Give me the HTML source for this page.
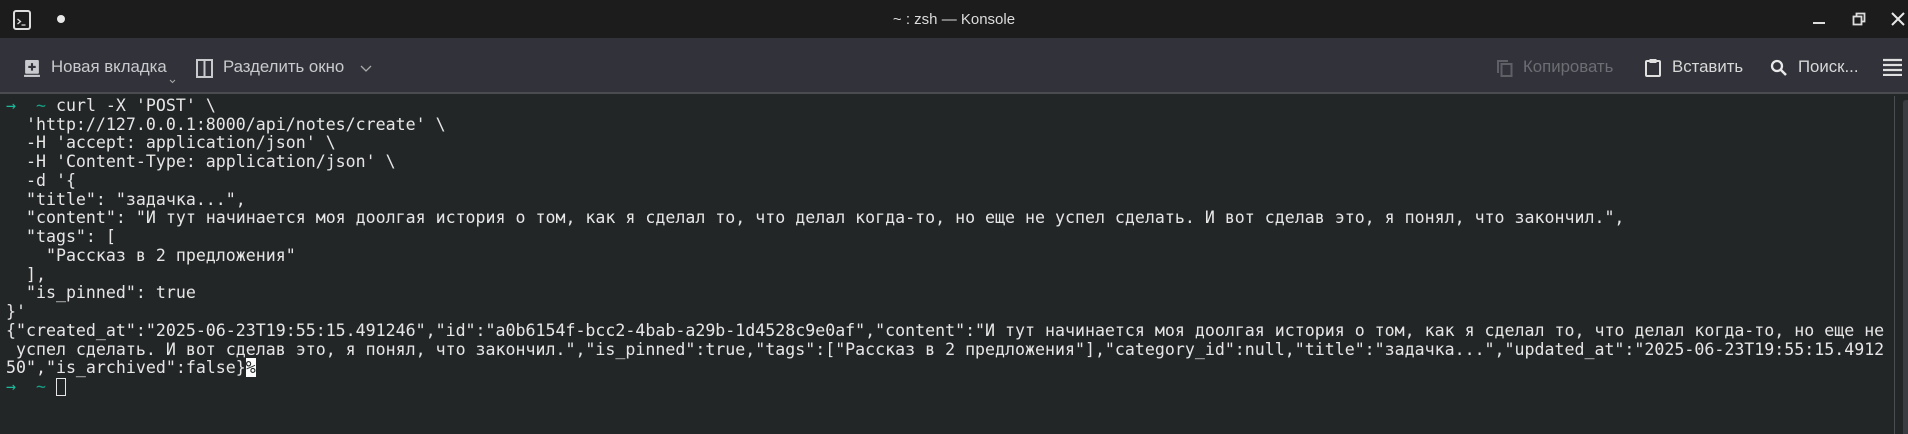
<!DOCTYPE html>
<html><head><meta charset="utf-8"><style>
*{margin:0;padding:0;box-sizing:border-box}
html,body{width:1908px;height:434px;overflow:hidden;background:#232627}
.title{position:absolute;left:0;top:0;width:1908px;height:38px;background:#1c1c1c;}
.title .t{position:absolute;left:0;width:1908px;top:11px;text-align:center;color:#dcdcdc;font:15px "Liberation Sans",sans-serif}
.tb{position:absolute;left:0;top:38px;width:1908px;height:56px;background:#31323a;border-bottom:2px solid #4a4c52}
.tb span{position:absolute;top:19px;font:16.8px "Liberation Sans","Noto Sans CJK SC",sans-serif;color:#c9cacd}
.term{position:absolute;left:6px;top:97px;font:16.6px/18.73px "DejaVu Sans Mono","Liberation Mono","Noto Sans CJK SC",monospace;color:#e6e6e6;white-space:pre}
.g{color:#1abc9c}.c{color:#16a085}
.pc{background:#fcfcfc;color:#232627}
.cur{display:inline-block;width:10px;height:18px;border:1.5px solid #e6e6e6;vertical-align:-4px}
</style></head><body>
<div class="title">
<svg style="position:absolute;left:13px;top:10px" width="18" height="20" viewBox="0 0 18 20"><rect x="1" y="1" width="16" height="18" rx="2" fill="none" stroke="#ddd" stroke-width="2"/><path d="M4.5 9l3 2.5-3 2.5M8.5 15h4" stroke="#ddd" stroke-width="1.3" fill="none"/></svg>
<div style="position:absolute;left:57px;top:15px;width:8px;height:8px;border-radius:50%;background:#e8e8e8"></div>
<div class="t">~ : zsh — Konsole</div>
<div style="position:absolute;left:1813px;top:22px;width:12px;height:2px;background:#ddd"></div>
<svg style="position:absolute;left:1852px;top:12px" width="14" height="14" viewBox="0 0 14 14"><rect x="1.5" y="4.5" width="8" height="8" fill="none" stroke="#ddd" stroke-width="1.8"/><path d="M4.5 4.5V1.5h8v8h-3" fill="none" stroke="#ddd" stroke-width="1.8"/></svg>
<svg style="position:absolute;left:1891px;top:12px" width="14" height="14" viewBox="0 0 14 14"><path d="M1 1l12 12M13 1L1 13" stroke="#e8e8e8" stroke-width="2"/></svg>
</div>
<div class="tb">
<svg style="position:absolute;left:24px;top:22px" width="16" height="18" viewBox="0 0 15 17"><rect x="1" y="0" width="13" height="13" rx="1" fill="#c9cacd"/><path d="M7.5 3v7M4 6.5h7" stroke="#31323a" stroke-width="2"/><rect x="0" y="14" width="15" height="2" fill="#c9cacd"/></svg>
<span style="left:51px">Новая вкладка</span>
<svg style="position:absolute;left:169px;top:41px" width="7" height="5"><path d="M1 1l2.5 2.5L6 1" stroke="#aaa" fill="none"/></svg>
<svg style="position:absolute;left:196px;top:21px" width="17" height="19"><rect x="1" y="1" width="15" height="17" fill="none" stroke="#c9cacd" stroke-width="2"/><path d="M8.5 1v17" stroke="#c9cacd" stroke-width="2"/></svg>
<span style="left:223px">Разделить окно</span>
<svg style="position:absolute;left:360px;top:27px" width="12" height="8"><path d="M1 1l5 5 5-5" stroke="#aaa" fill="none" stroke-width="1.3"/></svg>
<svg style="position:absolute;left:1496px;top:21px" width="17" height="18"><path d="M2 14V2h10" fill="none" stroke="#5e6065" stroke-width="2"/><rect x="5.5" y="5" width="10" height="12" fill="none" stroke="#5e6065" stroke-width="2"/></svg>
<span style="left:1523px;color:#6c6e73">Копировать</span>
<svg style="position:absolute;left:1645px;top:20px" width="16" height="19"><rect x="1" y="3" width="14" height="15" rx="1" fill="none" stroke="#e0e0e0" stroke-width="2"/><rect x="4.5" y="1" width="7" height="4" fill="#e0e0e0"/></svg>
<span style="left:1672px;color:#d8d8d8">Вставить</span>
<svg style="position:absolute;left:1770px;top:21px" width="18" height="18"><circle cx="7" cy="7" r="5" fill="none" stroke="#e8e8e8" stroke-width="2.3"/><path d="M10.5 10.5l5.5 5.5" stroke="#e8e8e8" stroke-width="2.5"/></svg>
<span style="left:1798px;color:#d8d8d8">Поиск...</span>
<svg style="position:absolute;left:1883px;top:20px" width="19" height="18"><path d="M0 2h19M0 7h19M0 12h19M0 17h19" stroke="#e0e0e0" stroke-width="2.2"/></svg>
</div>
<div style="position:absolute;left:1894px;top:96px;width:1px;height:338px;background:#4a4d52"></div>
<div style="position:absolute;left:1903px;top:100px;width:5px;height:334px;background:#3a3d42;border-radius:3px 0 0 0"></div>
<div class="term"><span class="g">→</span>  <span class="c">~</span> curl -X 'POST' \
  'http://127.0.0.1:8000/api/notes/create' \
  -H 'accept: application/json' \
  -H 'Content-Type: application/json' \
  -d '{
  "title": "задачка...",
  "content": "И тут начинается моя доолгая история о том, как я сделал то, что делал когда-то, но еще не успел сделать. И вот сделав это, я понял, что закончил.",
  "tags": [
    "Рассказ в 2 предложения"
  ],
  "is_pinned": true
}'
{"created_at":"2025-06-23T19:55:15.491246","id":"a0b6154f-bcc2-4bab-a29b-1d4528c9e0af","content":"И тут начинается моя доолгая история о том, как я сделал то, что делал когда-то, но еще не
 успел сделать. И вот сделав это, я понял, что закончил.","is_pinned":true,"tags":["Рассказ в 2 предложения"],"category_id":null,"title":"задачка...","updated_at":"2025-06-23T19:55:15.4912
50","is_archived":false}<span class="pc">%</span>
<span class="g">→</span>  <span class="c">~</span> <span class="cur"></span></div>
</body></html>
